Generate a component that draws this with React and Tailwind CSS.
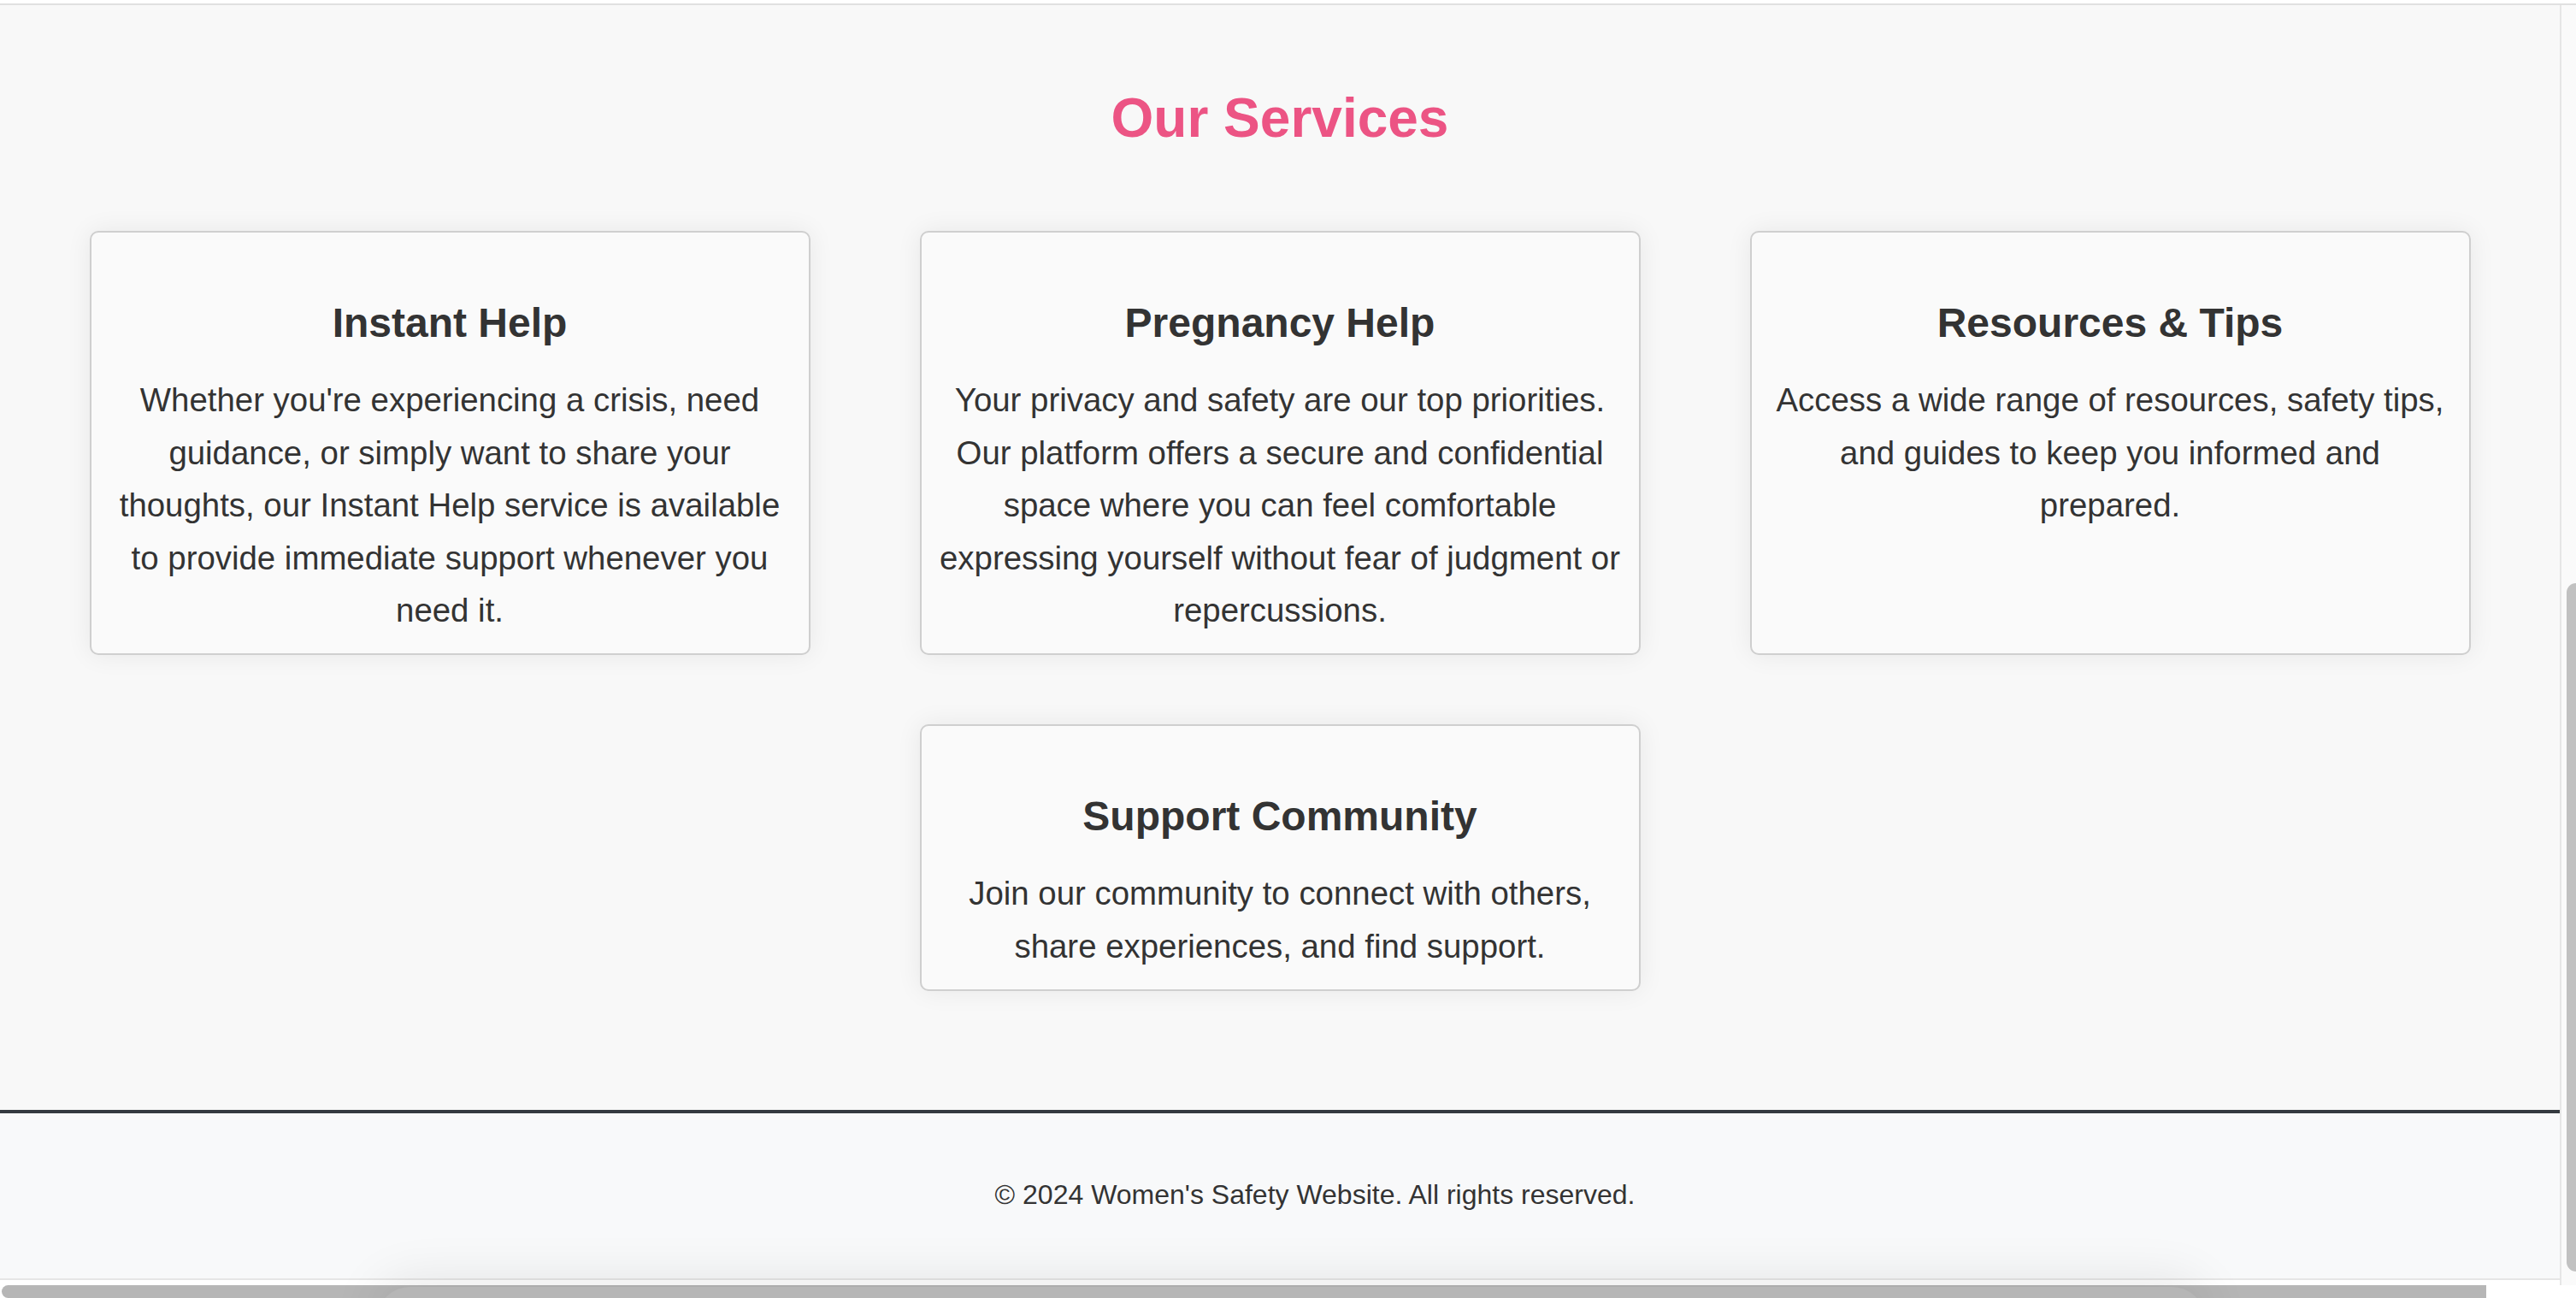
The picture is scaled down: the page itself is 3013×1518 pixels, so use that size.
const services = [
  {
    title: 'Instant Help',
    text: "Whether you're experiencing a crisis, need guidance, or simply want to share your thoughts, our Instant Help service is available to provide immediate support whenever you need it.",
  },
  {
    title: 'Pregnancy Help',
    text: 'Your privacy and safety are our top priorities. Our platform offers a secure and confidential space where you can feel comfortable expressing yourself without fear of judgment or repercussions.',
  },
  {
    title: 'Resources & Tips',
    text: 'Access a wide range of resources, safety tips, and guides to keep you informed and prepared.',
  },
  {
    title: 'Support Community',
    text: 'Join our community to connect with others, share experiences, and find support.',
  },
];

const ServiceCard = ({ title, text }) => (
  <div className="w-[843px] px-[20px] pt-[20px] pb-[20px] bg-[#fafafa] border-2 border-[#cfcfcf] rounded-[10px] shadow-[0_0_30px_rgba(0,0,0,0.07)] text-center">
    <h3 className="mt-[48px] mb-[20px] text-[48px] leading-[1.6] font-bold text-[#333]">{title}</h3>
    <p className="m-0 text-[38.4px] leading-[1.6] text-[#333]">{text}</p>
  </div>
);

const App = () => {
  return (
    <div
      className="relative w-[3013px] h-[1518px] overflow-hidden bg-white flex flex-col"
      style={{ fontFamily: '"Liberation Sans", Arial, sans-serif' }}
    >
      <div className="h-[4px] bg-white shrink-0" />
      <div className="h-[2px] bg-[#e0e0e0] shrink-0" />

      <div className="flex flex-1 min-h-0">
        <div className="w-[2994px] flex flex-col">
          <main className="bg-[#f8f8f8] pt-[81px] pb-[139px]">
            <h2 className="m-0 mb-[81px] text-center text-[64px] leading-[1.6] font-bold text-[#ec5484]">
              Our Services
            </h2>
            <div className="flex flex-wrap justify-center gap-x-[128px] gap-y-[81px]">
              {services.map((s) => (
                <ServiceCard key={s.title} title={s.title} text={s.text} />
              ))}
            </div>
          </main>

          <footer className="bg-[#f8f9fa] border-t-4 border-[#343a40] pt-[70px] pb-[72px] pl-[82px] text-center">
            <p className="m-0 text-[32px] leading-[1.6] text-[#333]">
              © 2024 Women's Safety Website. All rights reserved.
            </p>
          </footer>
          <div className="h-[2px] bg-[#e6e6e6]" />
          <div className="flex-1 bg-white" />
        </div>

        <div className="w-[2px] bg-[#e6e6e6]" />
        <div className="w-[17px] bg-[#fafafa] flex justify-end">
          <div className="w-[11px] mt-[676px] h-[805px] rounded-l-full bg-[#c1c1c1]" />
        </div>
      </div>

      <div className="h-[15px] shrink-0 bg-white px-[2px]">
        <div className="w-[2906px] h-full rounded-tl-[8px] rounded-bl-[8px] bg-[#b6b6b6]" />
      </div>

      <div className="absolute left-[440px] top-[1505px] w-[2140px] h-[80px] rounded-[40px] shadow-[0_-8px_60px_rgba(0,0,0,0.09)] pointer-events-none" />
    </div>
  );
};

export default App;
